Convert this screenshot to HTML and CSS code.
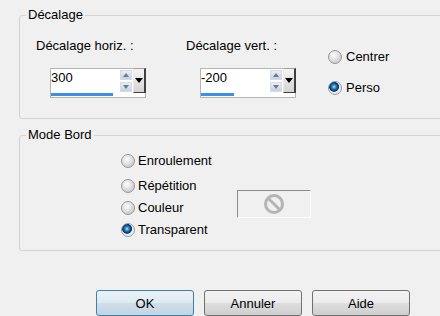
FILE: index.html
```html
<!DOCTYPE html>
<html lang="fr">

<head>
    <meta charset="UTF-8">
    <meta name="viewport" content="width=device-width, initial-scale=1.0">
    <title>Décalage</title>
    <link rel="stylesheet" href="styles.css">
</head>

<body>
    <div class="dialog">
        <!-- Décalage -->
        <fieldset class="group group-offset">
            <legend>Décalage</legend>
            <div class="offset-row">
                <div class="field field-h">
                    <div class="field-label">Décalage horiz. :</div>
                    <div class="spin">
                        <div class="spin-top">
                            <span class="spin-value">300</span>
                            <span class="spin-arrows">
                                <span class="arrow arrow-up"></span>
                                <span class="arrow arrow-down"></span>
                            </span>
                            <span class="spin-drop"></span>
                        </div>
                        <div class="spin-track"><span class="spin-bar" style="width: 62px"></span></div>
                    </div>
                </div>
                <div class="field field-v">
                    <div class="field-label">Décalage vert. :</div>
                    <div class="spin">
                        <div class="spin-top">
                            <span class="spin-value">-200</span>
                            <span class="spin-arrows">
                                <span class="arrow arrow-up"></span>
                                <span class="arrow arrow-down"></span>
                            </span>
                            <span class="spin-drop"></span>
                        </div>
                        <div class="spin-track"><span class="spin-bar" style="width: 33px"></span></div>
                    </div>
                </div>
                <div class="place-list">
                    <label class="radio-row"><span class="radio"></span>Centrer</label>
                    <label class="radio-row"><span class="radio checked"></span>Perso</label>
                </div>
            </div>
        </fieldset>

        <!-- Mode Bord -->
        <fieldset class="group group-mode">
            <legend>Mode Bord</legend>
            <div class="mode-row">
                <div class="mode-list">
                    <label class="radio-row"><span class="radio"></span>Enroulement</label>
                    <label class="radio-row"><span class="radio"></span>Répétition</label>
                    <label class="radio-row"><span class="radio"></span>Couleur</label>
                    <label class="radio-row"><span class="radio checked"></span>Transparent</label>
                </div>
                <div class="color-box">
                    <svg width="22" height="22" viewBox="0 0 22 22">
                        <circle cx="11" cy="11" r="8.5" fill="none" stroke="#b4b4b4" stroke-width="3"/>
                        <line x1="5" y1="5" x2="17" y2="17" stroke="#b4b4b4" stroke-width="3"/>
                    </svg>
                </div>
            </div>
        </fieldset>

        <div class="buttons">
            <button class="btn btn-default">OK</button>
            <button class="btn">Annuler</button>
            <button class="btn">Aide</button>
        </div>
    </div>
</body>

</html>
```

FILE: styles.css
```css
html, body {
    margin: 0;
    padding: 0;
    overflow: hidden;
}

body {
    font-family: "Liberation Sans", Arial, sans-serif;
    font-size: 13px;
    color: #000;
    background-color: #f0f0f0;
}

.dialog {
    width: 440px;
    height: 316px;
    padding-top: 7px;
    box-sizing: border-box;
}

.group {
    box-sizing: border-box;
    margin: 0 0 0 19px;
    width: 440px;
    padding: 0;
    border: 1px solid #d3d3d3;
    border-radius: 3px;
}

.group legend {
    margin-left: 6px;
    padding: 0 2px;
    line-height: 16px;
}

.group-offset {
    height: 112px;
}

.group-mode {
    height: 124px;
    margin-top: 8px;
}

/* ligne décalage */
.offset-row {
    display: flex;
    padding: 15px 0 0 16px;
}

.field-h {
    width: 150px;
}

.field-v {
    width: 143px;
}

.field-label {
    line-height: 16px;
    margin-bottom: 14px;
}

.spin {
    margin-left: 14px;
    width: 96px;
    height: 30px;
    box-sizing: border-box;
    border: 1px solid #b5b5b5;
    background-color: #fff;
    display: flex;
    flex-direction: column;
}

.spin-top {
    display: flex;
    height: 24px;
}

.spin-value {
    flex: 1;
    line-height: 16px;
    padding-top: 1px;
}

.spin-arrows {
    width: 12px;
    display: flex;
    flex-direction: column;
    gap: 2px;
    padding-top: 1px;
    margin-right: 1px;
}

.arrow {
    height: 10px;
    background: linear-gradient(#e9eef6, #c6d0de);
    border: 1px solid #d4dbe6;
    box-sizing: border-box;
    position: relative;
}

.arrow::after {
    content: "";
    position: absolute;
    left: 2px;
    top: 2px;
    border-left: 3px solid transparent;
    border-right: 3px solid transparent;
}

.arrow-up::after {
    border-bottom: 4px solid #6a7a94;
}

.arrow-down::after {
    border-top: 4px solid #6a7a94;
}

.spin-drop {
    width: 13px;
    margin: -1px -1px 0 0;
    box-sizing: border-box;
    background: linear-gradient(#f4f4f4, #d4d4d4);
    border-left: 1px solid #e8e8e8;
    border-right: 2px solid #404040;
    border-bottom: 1px solid #404040;
    border-top: 1px solid #a0a0a0;
    display: flex;
    align-items: center;
    justify-content: center;
}

.spin-drop::after {
    content: "";
    border-left: 4px solid transparent;
    border-right: 4px solid transparent;
    border-top: 5px solid #000;
}

.spin-track {
    flex: 1;
    display: flex;
    align-items: flex-end;
    padding-bottom: 1px;
}

.spin-bar {
    display: block;
    height: 3px;
    background-color: #3d8ee6;
}

/* boutons radio */
.place-list {
    padding-top: 11px;
    margin-left: -1px;
    display: flex;
    flex-direction: column;
    gap: 15px;
}

.radio-row {
    display: flex;
    align-items: center;
    height: 16px;
    line-height: 16px;
}

.radio {
    flex: none;
    width: 14px;
    height: 14px;
    box-sizing: border-box;
    border-radius: 50%;
    border: 1px solid #979797;
    background: radial-gradient(circle at 40% 35%, #ffffff 0, #e6e6e6 35%, #bdbdbd 100%);
    margin-right: 4px;
}

.radio.checked {
    border-color: #8e9eae;
    background: radial-gradient(circle at 42% 40%, #c8ecff 0, #3d9de4 1.5px, #0f5a9c 3.2px, #14304b 4.6px, #eef2f5 5.3px, #d9dee2 100%);
}

/* mode bord */
.mode-row {
    display: flex;
    padding: 7px 0 0 101px;
}

.mode-list {
    width: 116px;
}

.mode-list .radio-row {
    height: 22px;
}

.mode-list .radio-row:first-child {
    margin-bottom: 3px;
}

.mode-list .radio {
    margin-right: 3px;
}

.color-box {
    margin-top: 40px;
    width: 74px;
    height: 28px;
    box-sizing: border-box;
    border-top: 1px solid #8c8c8c;
    border-left: 1px solid #8c8c8c;
    border-right: 1px solid #fff;
    border-bottom: 1px solid #fff;
    display: flex;
    align-items: center;
    justify-content: center;
}

/* boutons */
.buttons {
    display: flex;
    gap: 10px;
    padding-left: 96px;
    margin-top: 39px;
}

.btn {
    width: 98px;
    height: 26px;
    padding: 0;
    font-family: "Liberation Sans", Arial, sans-serif;
    font-size: 13px;
    color: #000;
    border: 1px solid #707070;
    border-radius: 3px;
    background: linear-gradient(#f3f3f3 0, #ebebeb 50%, #dddddd 51%, #cfcfcf 100%);
}

.btn-default {
    border-color: #3c7fb1;
    background: linear-gradient(#eaf2f8 0, #dde9f1 50%, #cfdfea 51%, #c2d5e3 100%);
}
```
